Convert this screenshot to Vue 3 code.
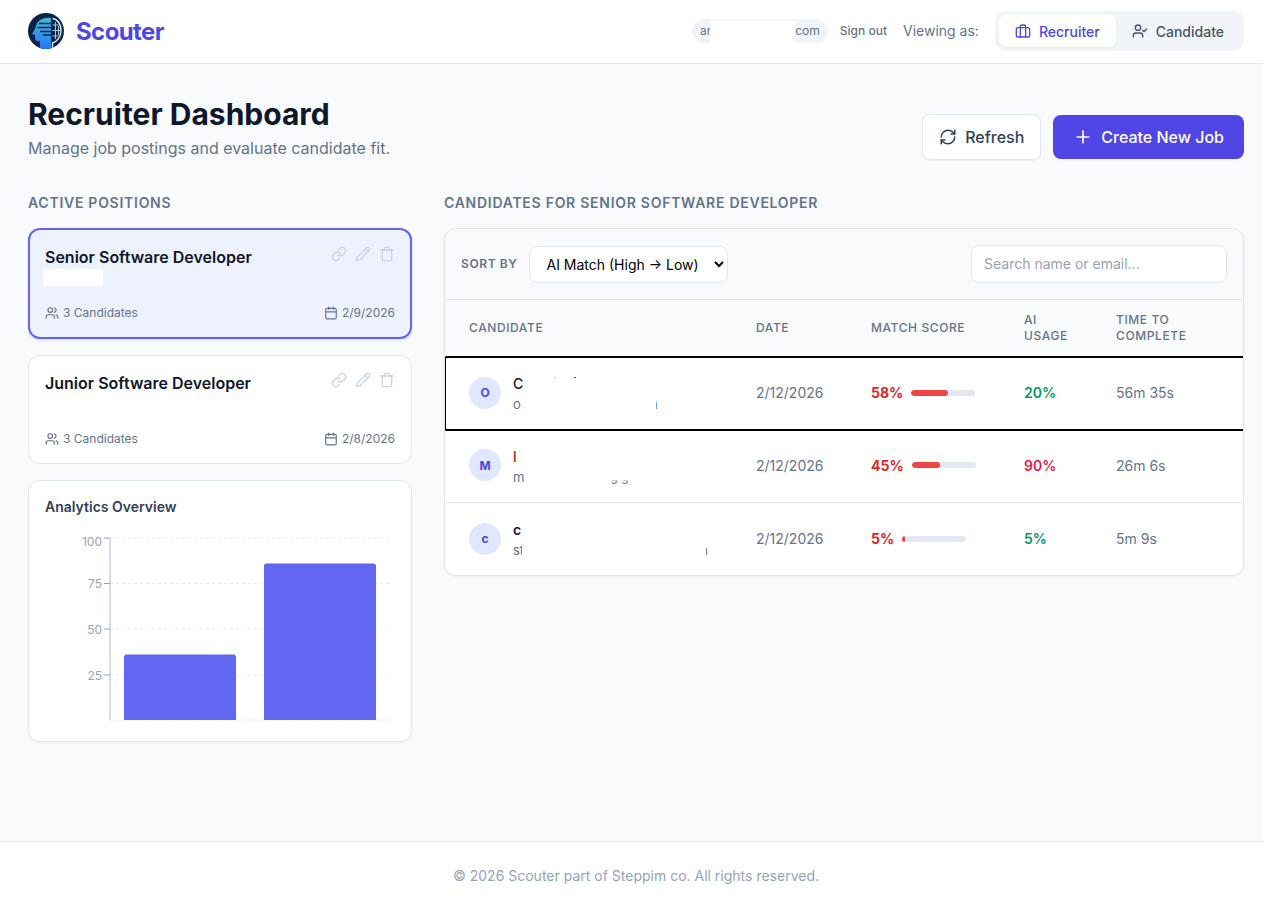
<script setup>
import { ref } from 'vue'

const sort = ref('match')

const jobs = [
  { id: 1, title: 'Senior Software Developer', count: 3, date: '2/9/2026', active: true },
  { id: 2, title: 'Junior Software Developer', count: 3, date: '2/8/2026', active: false }
]

const candidates = [
  { id: 1, initial: 'O', name: 'C', specks: true, email: 'o', tailAt: 135, date: '2/12/2026', score: 58, ai: 20, aiHigh: false, time: '56m 35s', focused: true },
  { id: 2, initial: 'M', name: 'l', nameClass: 'redname', email: 'm', date: '2/12/2026', score: 45, ai: 90, aiHigh: true, time: '26m 6s', descend: true },
  { id: 3, initial: 'c', name: 'c', nameClass: 'boldname', email: 'st', emailClip: true, tailAt: 184, date: '2/12/2026', score: 5, ai: 5, aiHigh: false, time: '5m 9s' }
]

const ticks = [
  { y: 538, labelY: 545.5, label: '100' },
  { y: 583.5, labelY: 588, label: '75' },
  { y: 629, labelY: 633.5, label: '50' },
  { y: 675, labelY: 679.5, label: '25' }
]
</script>

<template>
  <div class="page">
    <header class="topbar">
      <div class="brand">
        <svg class="logo" viewBox="0 0 36 36" width="36" height="36">
          <defs>
            <linearGradient id="headfill" x1="0" y1="0" x2="0" y2="1">
              <stop offset="0" stop-color="#45b8dc" />
              <stop offset="1" stop-color="#2277f0" />
            </linearGradient>
            <clipPath id="logoclip"><circle cx="18" cy="18" r="18" /></clipPath>
          </defs>
          <circle cx="18" cy="18" r="18" fill="#0b2347" />
          <g clip-path="url(#logoclip)">
            <path d="M23 5C15 4 8 8 7.500 15l-3.500 6 3 1v3.500c0 2 2 3 5 2.500v8h11z" fill="url(#headfill)" />
            <path d="M24.500 5.500c5 .5 8.500 5.500 8.500 12s-4 11-8.500 12.500v6" fill="none" stroke="#d5e8f2" stroke-width="1.500" />
            <path d="M27.500 9v17M30.500 13v9M24.500 12h6M24.500 17.500h8M24.500 23h6" fill="none" stroke="#a9cbdf" stroke-width="1" />
            <path d="M11 10.500h12M9.500 14.500h13.500M12 18.500h11M15 22h8" fill="none" stroke="#0b2347" stroke-width="1.600" />
          </g>
        </svg>
        <span class="brand-name">Scouter</span>
      </div>
      <div class="top-right">
        <div class="email-pill"><span>ar</span><span class="email-mask"></span><span>com</span></div>
        <button class="signout">Sign out</button>
        <span class="viewing">Viewing as:</span>
        <div class="role-switch">
          <button class="role active">
            <svg class="ico" width="16" height="16" viewBox="0 0 24 24"><rect x="2" y="7" width="20" height="14" rx="2" /><path d="M16 21V5a2 2 0 0 0-2-2h-4a2 2 0 0 0-2 2v16" /></svg>
            Recruiter
          </button>
          <button class="role">
            <svg class="ico" width="16" height="16" viewBox="0 0 24 24"><path d="M16 21v-2a4 4 0 0 0-4-4H6a4 4 0 0 0-4 4v2" /><circle cx="9" cy="7" r="4" /><polyline points="16 11 18 13 22 9" /></svg>
            Candidate
          </button>
        </div>
      </div>
    </header>

    <main class="content">
      <div class="page-head">
        <div>
          <h1>Recruiter Dashboard</h1>
          <p>Manage job postings and evaluate candidate fit.</p>
        </div>
        <div class="head-actions">
          <button class="btn refresh">
            <svg class="ico" width="18" height="18" viewBox="0 0 24 24"><path d="M3 12a9 9 0 0 1 9-9 9.750 9.750 0 0 1 6.740 2.740L21 8" /><path d="M21 3v5h-5" /><path d="M21 12a9 9 0 0 1-9 9 9.750 9.750 0 0 1-6.740-2.740L3 16" /><path d="M8 16H3v5" /></svg>
            Refresh
          </button>
          <button class="btn create">
            <svg class="ico" width="20" height="20" viewBox="0 0 24 24"><path d="M5 12h14" /><path d="M12 5v14" /></svg>
            Create New Job
          </button>
        </div>
      </div>

      <div class="columns">
        <section class="left">
          <h2 class="section-title">Active Positions</h2>
          <article v-for="job in jobs" :key="job.id" class="job-card" :class="{ selected: job.active }">
            <div class="job-top">
              <h3>{{ job.title }}</h3>
              <div class="job-tools">
                <svg class="ico" width="16" height="16" viewBox="0 0 24 24"><path d="M10 13a5 5 0 0 0 7.540.54l3-3a5 5 0 0 0-7.070-7.070l-1.720 1.710" /><path d="M14 11a5 5 0 0 0-7.540-.54l-3 3a5 5 0 0 0 7.070 7.070l1.710-1.710" /></svg>
                <svg class="ico" width="16" height="16" viewBox="0 0 24 24"><path d="M17 3a2.850 2.830 0 1 1 4 4L7.500 20.500 2 22l1.500-5.500Z" /><path d="m15 5 4 4" /></svg>
                <svg class="ico" width="16" height="16" viewBox="0 0 24 24"><path d="M3 6h18" /><path d="M19 6v14c0 1-1 2-2 2H7c-1 0-2-1-2-2V6" /><path d="M8 6V4c0-1 1-2 2-2h4c1 0 2 1 2 2v2" /></svg>
              </div>
            </div>
            <div class="job-mask"></div>
            <div class="job-meta">
              <span class="meta-item">
                <svg class="ico" width="14" height="14" viewBox="0 0 24 24"><path d="M16 21v-2a4 4 0 0 0-4-4H6a4 4 0 0 0-4 4v2" /><circle cx="9" cy="7" r="4" /><path d="M22 21v-2a4 4 0 0 0-3-3.870" /><path d="M16 3.130a4 4 0 0 1 0 7.750" /></svg>
                {{ job.count }} Candidates
              </span>
              <span class="meta-item">
                <svg class="ico" width="14" height="14" viewBox="0 0 24 24"><rect x="3" y="4" width="18" height="18" rx="2" /><path d="M16 2v4M8 2v4M3 10h18" /></svg>
                {{ job.date }}
              </span>
            </div>
          </article>

          <article class="chart-card">
            <h4>Analytics Overview</h4>
            <svg class="chart" width="350" height="210" viewBox="45 530 350 210">
              <line v-for="y in [538, 583.5, 629, 675, 720]" :key="y" x1="110" x2="390" :y1="y" :y2="y" stroke="#e5e9f2" stroke-dasharray="3 3" />
              <line x1="110" x2="110" y1="538" y2="720" stroke="#c8cfe0" stroke-width="1.500" />
              <g v-for="t in ticks" :key="t.y">
                <line x1="104" x2="110" :y1="t.y" :y2="t.y" stroke="#94a3b8" />
                <text x="102" :y="t.labelY" text-anchor="end" class="tick">{{ t.label }}</text>
              </g>
              <path d="M124 720V657a2.500 2.500 0 0 1 2.500-2.500h107a2.500 2.500 0 0 1 2.500 2.500v63z" fill="#6366f1" />
              <path d="M264 720V566a2.500 2.500 0 0 1 2.500-2.500h107a2.500 2.500 0 0 1 2.500 2.500v154z" fill="#6366f1" />
            </svg>
          </article>
        </section>

        <section class="right">
          <h2 class="section-title">Candidates for Senior Software Developer</h2>
          <div class="table-card">
            <div class="toolbar">
              <div class="sort">
                <label for="sort-select">Sort by</label>
                <select id="sort-select" v-model="sort">
                  <option value="match">AI Match (High → Low)</option>
                  <option value="date">Date (Newest)</option>
                </select>
              </div>
              <input class="search" type="text" placeholder="Search name or email..." />
            </div>
            <table>
              <colgroup>
                <col style="width: 287px" />
                <col style="width: 115px" />
                <col style="width: 153px" />
                <col style="width: 92px" />
                <col />
              </colgroup>
              <thead>
                <tr>
                  <th>Candidate</th>
                  <th>Date</th>
                  <th>Match Score</th>
                  <th>AI<br />Usage</th>
                  <th>Time to<br />Complete</th>
                </tr>
              </thead>
              <tbody>
                <tr v-for="c in candidates" :key="c.id" :class="{ focused: c.focused }">
                  <td>
                    <div class="person">
                      <span class="avatar">{{ c.initial }}</span>
                      <div class="who">
                        <div class="name" :class="c.nameClass">
                          {{ c.name }}
                          <template v-if="c.specks">
                            <i class="speck pink"></i>
                            <i class="speck dark"></i>
                          </template>
                        </div>
                        <div class="mail">
                          <span :class="{ clipmail: c.emailClip }">{{ c.email }}</span>
                          <span v-if="c.tailAt" class="tail" :style="{ marginLeft: c.tailAt + 'px' }">n</span>
                          <span v-if="c.descend" class="descend">g g</span>
                        </div>
                      </div>
                    </div>
                  </td>
                  <td class="muted">{{ c.date }}</td>
                  <td>
                    <div class="score">
                      <span class="pct">{{ c.score }}%</span>
                      <span class="track"><span class="fill" :style="{ width: c.score + '%' }"></span></span>
                    </div>
                  </td>
                  <td><span class="ai" :class="c.aiHigh ? 'ai-high' : 'ai-low'">{{ c.ai }}%</span></td>
                  <td class="muted">{{ c.time }}</td>
                </tr>
              </tbody>
            </table>
          </div>
        </section>
      </div>
    </main>

    <footer class="footer">© 2026 Scouter part of Steppim co. All rights reserved.</footer>
  </div>
</template>

<style>
body {
  background: #f8fafc;
}
</style>

<style scoped>
.page {
  min-height: 905px;
  display: flex;
  flex-direction: column;
  background: #f8fafc;
  font-family: Inter, "Liberation Sans", sans-serif;
  color: #0f172a;
}

button {
  font-family: inherit;
  cursor: pointer;
}

.ico {
  fill: none;
  stroke: currentColor;
  stroke-width: 2;
  stroke-linecap: round;
  stroke-linejoin: round;
  flex-shrink: 0;
}

.topbar {
  height: 64px;
  box-sizing: border-box;
  display: flex;
  align-items: center;
  justify-content: space-between;
  padding: 0 19px 1px 28px;
  background: #fff;
  border-bottom: 1px solid #e2e8f0;
}

.brand {
  display: flex;
  align-items: center;
  gap: 12px;
}

.brand-name {
  font-size: 24px;
  font-weight: 700;
  letter-spacing: -0.6px;
  color: #4f46e5;
}

.top-right {
  display: flex;
  align-items: center;
}

.email-pill {
  box-sizing: border-box;
  display: flex;
  align-items: center;
  height: 24px;
  padding: 0 8px 1px;
  border-radius: 12px;
  background: #f1f5f9;
  font-size: 12px;
  color: #64748b;
}

.email-mask {
  width: 85px;
  height: 22px;
  align-self: flex-end;
  margin-bottom: -1px;
  background: #fff;
  margin-left: -1px;
}

.signout {
  border: none;
  background: none;
  padding: 0 0 1px;
  margin-left: 12px;
  font-size: 12px;
  font-weight: 500;
  color: #64748b;
}

.viewing {
  margin: 0 0 1px 16px;
  font-size: 14px;
  color: #64748b;
}

.role-switch {
  display: flex;
  margin-left: 16px;
  padding: 4px;
  background: #f1f5f9;
  border-radius: 10px;
}

.role {
  display: flex;
  align-items: center;
  gap: 8px;
  height: 32px;
  padding: 0 16px;
  border: none;
  border-radius: 7px;
  background: none;
  font-size: 14px;
  font-weight: 500;
  color: #475569;
}

.role.active {
  background: #fff;
  color: #4f46e5;
  box-shadow: 0 1px 2px rgba(0, 0, 0, 0.05);
}

.content {
  flex: 1;
  padding: 32px 19px 32px 28px;
}

.page-head {
  display: flex;
  align-items: center;
  justify-content: space-between;
  margin-bottom: 32px;
}

h1 {
  margin: 0;
  font-size: 30px;
  line-height: 36px;
  font-weight: 700;
}

.page-head p {
  margin: 4px 0 0;
  font-size: 16px;
  line-height: 24px;
  color: #64748b;
}

.head-actions {
  display: flex;
  align-items: center;
  gap: 12px;
  margin-top: 18px;
}

.btn {
  display: flex;
  align-items: center;
  gap: 8px;
  height: 44px;
  border-radius: 8px;
  font-size: 16px;
  font-weight: 500;
}

.refresh {
  height: 46px;
  padding: 0 16px;
  background: #fff;
  border: 1px solid #e2e8f0;
  color: #334155;
  box-shadow: 0 1px 2px rgba(0, 0, 0, 0.05);
}

.create {
  padding: 0 20px;
  background: #4f46e5;
  border: none;
  color: #fff;
  box-shadow: 0 1px 2px rgba(0, 0, 0, 0.05);
}

.columns {
  display: grid;
  grid-template-columns: 384px 800px;
  gap: 32px;
}

.left {
  display: flex;
  flex-direction: column;
  gap: 16px;
}

.section-title {
  margin: 0 0 -1px;
  padding-top: 1px;
  font-size: 14px;
  line-height: 20px;
  font-weight: 600;
  letter-spacing: 0.73px;
  text-transform: uppercase;
  color: #64748b;
}

.job-card {
  box-sizing: border-box;
  height: 109px;
  display: flex;
  flex-direction: column;
  padding: 15px 16px 16px;
  background: #fff;
  border: 1px solid #e2e8f0;
  border-radius: 12px;
}

.job-card.selected {
  height: 111px;
  padding: 15px 15px 16px;
  background: #eef2ff;
  border: 2px solid #6366f1;
  box-shadow: 0 1px 3px rgba(99, 102, 241, 0.2);
}

.job-top {
  display: flex;
  justify-content: space-between;
  align-items: flex-start;
}

h3 {
  margin: 0;
  font-size: 16px;
  line-height: 24px;
  font-weight: 600;
}

.job-tools {
  display: flex;
  gap: 8px;
  color: #cbd5e1;
  margin-top: 1px;
}

.job-mask {
  display: none;
}

.selected .job-mask {
  display: block;
  width: 60px;
  height: 17px;
  margin: 0 0 0 -2px;
  background: #fff;
}

.job-meta {
  margin-top: auto;
  display: flex;
  justify-content: space-between;
  font-size: 12px;
  line-height: 16px;
  color: #64748b;
}

.meta-item {
  display: flex;
  align-items: center;
  gap: 4px;
}

.chart-card {
  height: 262px;
  box-sizing: border-box;
  padding: 16px;
  background: #fff;
  border: 1px solid #e2e8f0;
  border-radius: 12px;
  box-shadow: 0 1px 3px rgba(0, 0, 0, 0.06);
}

h4 {
  margin: 0;
  font-size: 14px;
  line-height: 20px;
  font-weight: 600;
  color: #334155;
}

.chart {
  display: block;
  margin-top: 13px;
}

.tick {
  font-size: 12px;
  fill: #94a3b8;
}

.right {
  display: flex;
  flex-direction: column;
  gap: 16px;
}

.table-card {
  background: #fff;
  border: 1px solid #e2e8f0;
  border-radius: 12px;
  overflow: hidden;
  box-shadow: 0 1px 3px rgba(0, 0, 0, 0.06);
}

.toolbar {
  display: flex;
  align-items: center;
  justify-content: space-between;
  height: 70px;
  padding: 0 16px;
  background: #f8fafc;
  border-bottom: 1px solid #e2e8f0;
}

.sort {
  display: flex;
  align-items: center;
  gap: 12px;
}

.sort label {
  margin-bottom: 2px;
  font-size: 12px;
  font-weight: 600;
  letter-spacing: 0.6px;
  text-transform: uppercase;
  color: #64748b;
}

select {
  width: 199px;
  height: 37px;
  padding: 0 12px;
  background: #fff;
  border: 1px solid #e2e8f0;
  border-radius: 8px;
  font-family: inherit;
  font-size: 14px;
  color: #000;
}

.search {
  box-sizing: border-box;
  width: 256px;
  height: 38px;
  padding: 0 12px 2px;
  background: #fff;
  border: 1px solid #e2e8f0;
  border-radius: 8px;
  font-family: inherit;
  font-size: 14px;
}

.search::placeholder {
  color: #94a3b8;
}

/* the focused row runs past the card's right edge, so its outline is cut off there */
table {
  width: calc(100% + 3px);
  table-layout: fixed;
  border-collapse: collapse;
}

th {
  height: 57px;
  padding: 0 24px 1px;
  box-sizing: border-box;
  background: #f8fafc;
  text-align: left;
  font-size: 12px;
  line-height: 16px;
  font-weight: 500;
  letter-spacing: 0.6px;
  text-transform: uppercase;
  color: #64748b;
}

td {
  height: 73px;
  padding: 0 24px;
  box-sizing: border-box;
  border-top: 1px solid #e2e8f0;
  font-size: 14px;
  white-space: nowrap;
}

tr.focused {
  outline: 2px solid #000;
  outline-offset: -1px;
  border-radius: 2px;
}

tr.focused td {
  padding-bottom: 2px;
}

tbody tr:nth-child(2) td {
  height: 72px;
  padding-bottom: 2px;
}

.muted {
  color: #64748b;
}

.person {
  display: flex;
  align-items: center;
  gap: 12px;
}

.avatar {
  width: 32px;
  height: 32px;
  flex-shrink: 0;
  display: flex;
  align-items: center;
  justify-content: center;
  border-radius: 50%;
  background: #e0e7ff;
  color: #4f46e5;
  font-size: 12px;
  font-weight: 700;
}

.who {
  margin-top: 2px;
}

.name {
  display: flex;
  font-size: 14px;
  line-height: 20px;
  font-weight: 500;
  color: #0f172a;
}

.speck {
  display: block;
  width: 2px;
  height: 1px;
  margin-top: 3px;
}

.speck.pink {
  margin-left: 31px;
  background: #f0c4cc;
}

.speck.dark {
  margin-left: 18px;
  background: #9b2c3a;
}

.redname {
  color: #8f2d10;
}

.boldname {
  font-weight: 600;
}

.mail {
  display: flex;
  height: 18px;
  margin-top: 1px;
  font-size: 13px;
  line-height: 18px;
  color: #64748b;
}

.clipmail {
  display: block;
  width: 9px;
  overflow: hidden;
}

.tail {
  display: block;
  width: 2px;
  overflow: hidden;
  direction: rtl;
}

.descend {
  display: block;
  margin-left: 86px;
  font-size: 12px;
  clip-path: inset(72% 0 0 0);
}

.score {
  display: flex;
  align-items: center;
  gap: 8px;
}

.pct {
  font-weight: 700;
  color: #dc2626;
}

.track {
  display: block;
  width: 64px;
  height: 6px;
  border-radius: 3px;
  background: #e2e8f0;
  overflow: hidden;
}

.fill {
  display: block;
  height: 100%;
  border-radius: 3px;
  background: #ef4444;
}

.ai {
  font-weight: 600;
}

.ai-low {
  color: #059669;
}

.ai-high {
  color: #e11d48;
}

.footer {
  height: 64px;
  box-sizing: border-box;
  display: flex;
  align-items: center;
  justify-content: center;
  padding: 4px 19px 0 28px;
  background: #fff;
  border-top: 1px solid #e2e8f0;
  font-size: 14px;
  color: #94a3b8;
}
</style>
